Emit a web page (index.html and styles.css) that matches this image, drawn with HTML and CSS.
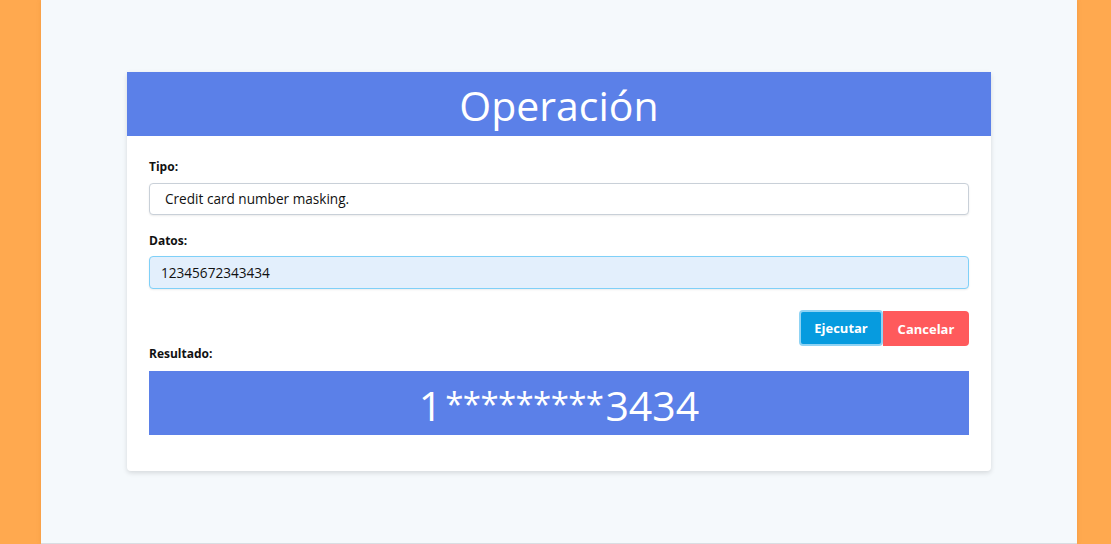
FILE: index.html
```html
<!DOCTYPE html>
<html lang="es">
<head>
<meta charset="utf-8">
<title>Operación</title>
<link rel="stylesheet" href="styles.css">
</head>
<body>
<div class="page">
  <main class="panel">
    <section class="card">
      <header class="card-header">Operación</header>
      <div class="card-body">
        <label class="label">Tipo:</label>
        <div class="input">Credit card number masking.</div>
        <label class="label label-datos">Datos:</label>
        <div class="input input-focus">12345672343434</div>
        <div class="actions">
          <button class="btn btn-run">Ejecutar</button>
          <button class="btn btn-cancel">Cancelar</button>
        </div>
        <label class="label label-result">Resultado:</label>
        <div class="result"><span class="digits">1</span><span class="mask">*********</span><span class="digits">3434</span></div>
      </div>
    </section>
  </main>
</div>
</body>
</html>
```
FILE: styles.css
```css
* { box-sizing: border-box; }
html, body { margin: 0; padding: 0; }
body {
  background: #ffa94f;
  font-family: "Open Sans", "Noto Sans", sans-serif;
  width: 1111px;
  height: 544px;
  overflow: hidden;
}
.page {
  display: flex;
  padding-left: 41px;
  height: 544px;
}
.panel {
  width: 1036px;
  height: 544px;
  background: #f5f9fc;
  border-bottom: 1px solid #d9dde2;
  box-shadow: 0 0 4px rgba(200, 110, 30, 0.25);
  display: flex;
  justify-content: center;
  padding-top: 72px;
}
.card {
  width: 864px;
  height: 399px;
  background: #ffffff;
  border-radius: 0 0 4px 4px;
  box-shadow: 0 2px 5px rgba(0, 0, 0, 0.13);
}
.card-header {
  height: 64px;
  background: #5b80e8;
  color: #ffffff;
  font-size: 41px;
  line-height: 66px;
  text-align: center;
  font-weight: 400;
}
.card-body {
  padding: 22px 22px 0 22px;
  display: flex;
  flex-direction: column;
}
.label {
  font-size: 12px;
  font-weight: 700;
  color: #111;
  line-height: 18px;
  height: 25px;
  display: block;
}
.label-datos { margin-top: 17px; height: 24px; }
.label-result { height: 24px; margin-top: 1px; line-height: 14px; }
.input {
  height: 32px;
  border: 1px solid #c9d0d8;
  border-radius: 4px;
  box-shadow: 0 1px 2px rgba(0, 0, 0, 0.08);
  font-size: 13.6px;
  line-height: 30px;
  padding-left: 15px;
  color: #111;
  background: #fff;
}
.input-focus {
  height: 33px;
  background: #e3effc;
  border-color: #7fd0f8;
  padding-left: 11px;
  line-height: 31px;
}
.actions {
  display: flex;
  justify-content: flex-end;
  margin-top: 21px;
  height: 36px;
}
.btn {
  font-family: inherit;
  font-size: 13px;
  font-weight: 700;
  color: #fff;
  border: none;
  padding: 0;
  cursor: pointer;
}
.btn-run {
  width: 84px;
  height: 36px;
  background: #069bdf;
  border-radius: 4px;
  border: 2px solid #8fd3f4;
}
.btn-cancel {
  width: 86px;
  height: 35px;
  margin-top: 1px;
  background: #ff5a5c;
  border-radius: 0 4px 4px 0;
}
.result {
  height: 64px;
  background: #5b80e8;
  color: #fff;
  font-size: 41px;
  line-height: 68px;
  text-align: center;
  display: flex;
  justify-content: center;
  align-items: baseline;
}
.mask {
  font-size: 33px;
  letter-spacing: -0.6px;
  padding: 0 2px 0 3px;
  transform: translateY(-5px);
  display: inline-block;
}
```
